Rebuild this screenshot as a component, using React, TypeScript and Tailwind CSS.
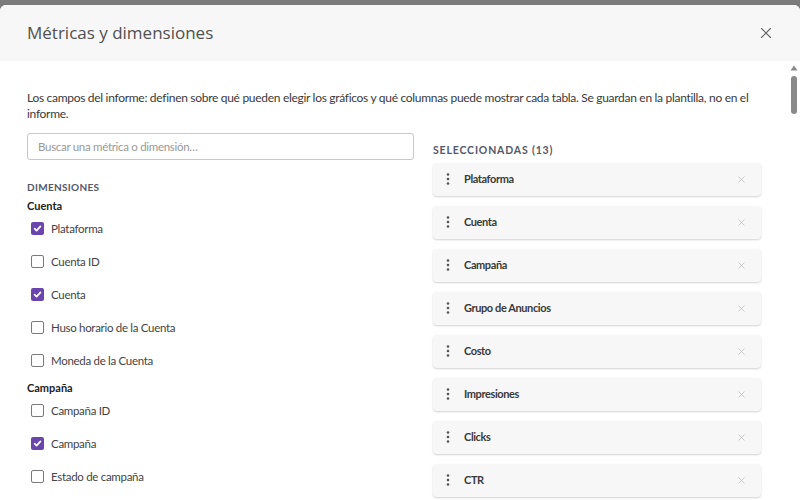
import { X } from 'lucide-react';

const dimensionGroups = [
  {
    label: 'Cuenta',
    items: [
      { name: 'Plataforma', checked: true },
      { name: 'Cuenta ID', checked: false },
      { name: 'Cuenta', checked: true },
      { name: 'Huso horario de la Cuenta', checked: false },
      { name: 'Moneda de la Cuenta', checked: false },
    ],
  },
  {
    label: 'Campaña',
    items: [
      { name: 'Campaña ID', checked: false },
      { name: 'Campaña', checked: true },
      { name: 'Estado de campaña', checked: false },
    ],
  },
];

const selected = ['Plataforma', 'Cuenta', 'Campaña', 'Grupo de Anuncios', 'Costo', 'Impresiones', 'Clicks', 'CTR'];

function Checkbox({ checked }: { checked: boolean }) {
  if (checked) {
    return (
      <span className="flex h-[13px] w-[13px] items-center justify-center rounded-[2px] bg-[#6a45ae]">
        <svg width="9" height="9" viewBox="0 0 10 10" fill="none">
          <path d="M1.8 5.2 L4 7.4 L8.3 2.6" stroke="#fff" strokeWidth="1.9" strokeLinecap="round" strokeLinejoin="round" />
        </svg>
      </span>
    );
  }
  return <span className="h-[13px] w-[13px] rounded-[2px] border-[1.5px] border-[#7a7a7a] bg-white" />;
}

function DragDots() {
  return (
    <svg width="4" height="12" viewBox="0 0 4 12" className="text-[#555]">
      <circle cx="2" cy="1.5" r="1.3" fill="currentColor" />
      <circle cx="2" cy="6" r="1.3" fill="currentColor" />
      <circle cx="2" cy="10.5" r="1.3" fill="currentColor" />
    </svg>
  );
}

export default function App() {
  return (
    <div className="h-[500px] w-[800px] overflow-hidden bg-[#7b7b7b] pt-[5px] font-['Lato',sans-serif]">
      <div className="flex h-full flex-col rounded-t-[6px] bg-white">
        <div className="flex h-[56px] shrink-0 items-center justify-between rounded-t-[6px] bg-[#f7f7f7] pl-[27px] pr-[25px]">
          <h2 className="font-['Open_Sans',sans-serif] text-[17px] text-[#505050]">Métricas y dimensiones</h2>
          <X className="h-[18px] w-[18px] text-[#666]" strokeWidth={1.5} />
        </div>

        <div className="flex min-h-0 flex-1">
          <div className="flex-1 px-[27px] pt-[29px]">
            <p className="text-[12px] leading-[16px] tracking-[-0.3px] text-[#3a3a3a]">
              Los campos del informe: definen sobre qué pueden elegir los gráficos y qué columnas puede mostrar cada tabla. Se guardan en la plantilla, no en el informe.
            </p>

            <div className="mt-[11px] flex gap-[19px]">
              <div className="w-[387px] shrink-0">
                <div className="flex h-[27px] items-center rounded-[3px] border border-[#c8c8c8] px-[10px] text-[11.5px] tracking-[-0.3px] text-[#999]">
                  Buscar una métrica o dimensión…
                </div>

                <div className="mt-[20px] text-[10px] font-bold leading-[14px] tracking-[0.03em] text-[#545868]">DIMENSIONES</div>

                {dimensionGroups.map((group, gi) => (
                  <div key={group.label} className={gi === 0 ? 'mt-[5px]' : 'mt-[4px]'}>
                    <div className="text-[11px] font-bold leading-[13px] text-[#222]">{group.label}</div>
                    {group.items.map((item) => (
                      <div key={item.name} className="flex h-[33px] items-center gap-[7px] pl-[4px]">
                        <Checkbox checked={item.checked} />
                        <span className="text-[11.5px] tracking-[-0.3px] text-[#444]">{item.name}</span>
                      </div>
                    ))}
                  </div>
                ))}
              </div>

              <div className="flex-1 pt-[10px]">
                <div className="text-[10.5px] font-bold leading-[14px] tracking-[0.08em] text-[#545868]">SELECCIONADAS (13)</div>
                <div className="mt-[6px] flex flex-col gap-[10px]">
                  {selected.map((name) => (
                    <div
                      key={name}
                      className="flex h-[33px] items-center rounded-[4px] bg-[#f7f7f7] pl-[13px] pr-[14px] pb-[1px] shadow-[0_1px_2px_rgba(0,0,0,0.18)]"
                    >
                      <DragDots />
                      <span className="ml-[14px] flex-1 text-[11px] font-bold tracking-[-0.4px] text-[#3a3a3a]">{name}</span>
                      <X className="h-[11px] w-[11px] text-[#bbb]" strokeWidth={1.6} />
                    </div>
                  ))}
                </div>
              </div>
            </div>
          </div>

          <div className="flex w-[12px] shrink-0 flex-col items-center pt-[4px]">
            <svg width="8" height="6" viewBox="0 0 8 6">
              <path d="M4 0.5 L7.5 5.5 L0.5 5.5 Z" fill="#8a8a8a" />
            </svg>
            <div className="mt-[5px] h-[38px] w-[6px] rounded-full bg-[#8a8a8a]" />
          </div>
        </div>
      </div>
    </div>
  );
}
